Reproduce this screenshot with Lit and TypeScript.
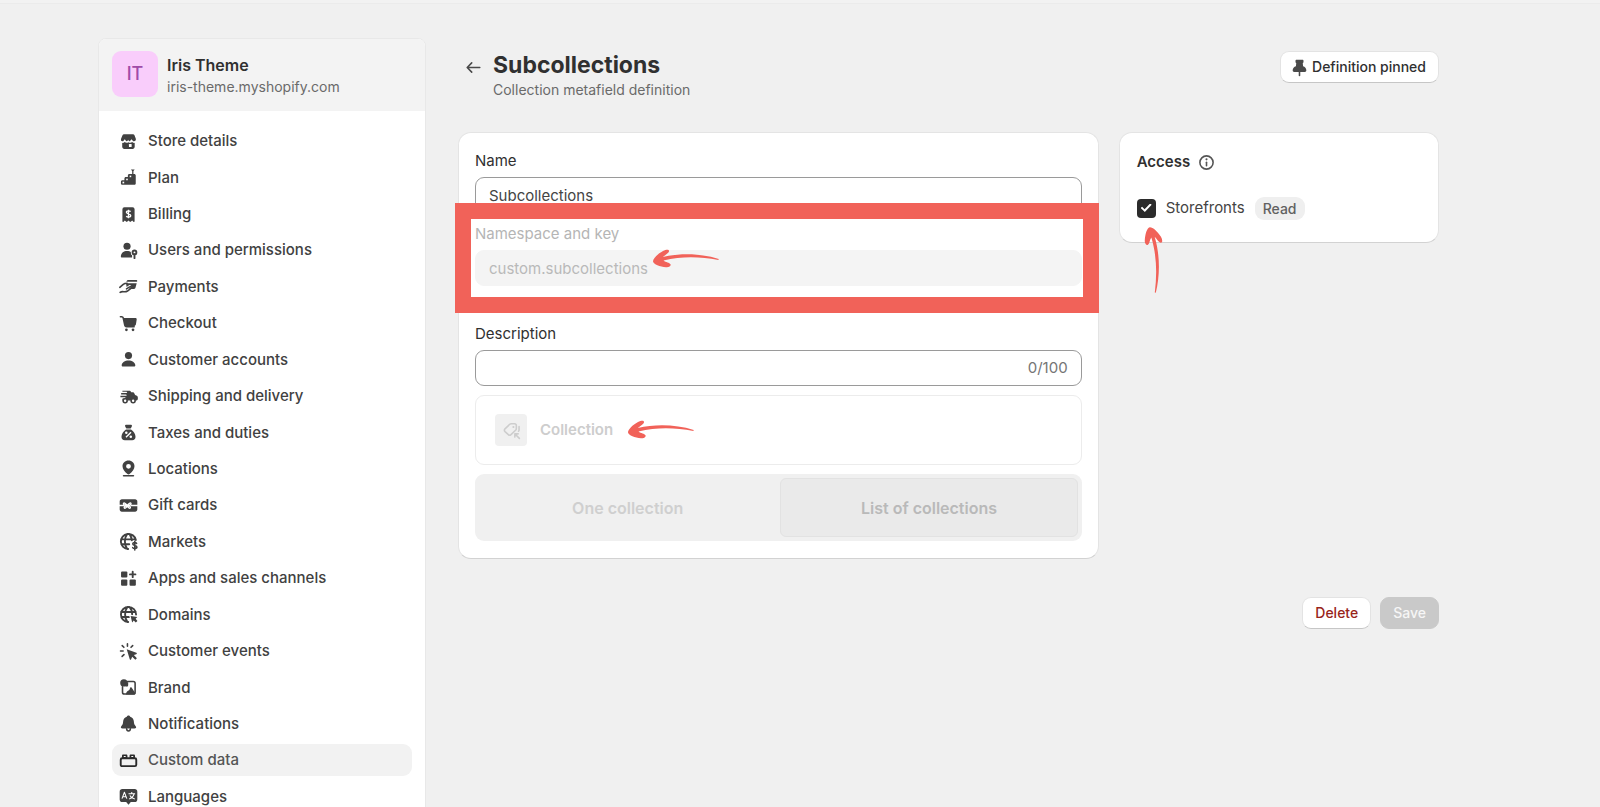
import { LitElement, html, svg, css, nothing } from "lit";
import { customElement, property, state } from "lit/decorators.js";
import { classMap } from "lit/directives/class-map.js";

// Glyphs drawn on a 20 x 20 grid; "cut" parts are painted in the panel colour.
const glyphs: Record<string, unknown> = {
  store: svg`
    <path d="M5.700 3h8.600c.6 0 1.100.3 1.300.9l1.300 3.300c.5 1.400-.3 2.600-1.700 2.600-.7 0-1.200-.6-1.700-1.300-.4-.6-.9-.6-1.300 0-.4.700-.9 1.200-1.500 1.200s-.5-1-1-1.400c-.4.400-.6 1.400-1.200 1.400S7.400 9.200 7 8.500c-.4-.6-.9-.6-1.200 0-.4.700-.9 1.300-1.600 1.300-1.400 0-1.700-1.200-1.200-2.600l1.400-3.300c.2-.6.7-.9 1.300-.9z"/>
    <path d="M4 11.300c.9.100 1.700-.2 2.400-.9.900.9 2.400 1 3.500.2 1.200.8 2.700.7 3.600-.2.7.7 1.500 1 2.400.9v3.800c0 1.100-.9 2-2 2H6c-1.100 0-2-.9-2-2z"/>
    <rect class="cut" x="10.400" y="12.300" width="2.600" height="3" rx=".5"/>`,
  plan: svg`
    <path d="M2.800 14c0-.8.6-1.400 1.400-1.400h1.900V11c0-.8.6-1.400 1.400-1.400h1.900V8c0-.8.6-1.400 1.400-1.400h4.700c.8 0 1.400.6 1.400 1.400v7.600c0 .8-.6 1.400-1.400 1.400H4.200c-.8 0-1.400-.6-1.400-1.400z"/>
    <rect class="cut" x="4.300" y="14" width="1.600" height="1.600"/>
    <rect class="cut" x="7.800" y="11.100" width="1.500" height="1.500"/>
    <rect class="cut" x="11.100" y="8.200" width="1.500" height="1.500"/>
    <path d="M12.300 2.300h3.600l-1.200 1.600v2.800h-1.200V3.900z"/>`,
  billing: svg`
    <path d="M4.200 5A1.900 1.900 0 0 1 6.100 3.100h7.800A1.900 1.900 0 0 1 15.800 5v11.500c0 .6-.7.8-1.100.4l-1.200-1.200-1.400 1.300c-.2.200-.6.200-.8 0L10 15.700l-1.300 1.300c-.2.200-.6.200-.8 0l-1.400-1.300-1.200 1.200c-.4.400-1.100.2-1.100-.4z"/>
    <path class="cut-line" d="M12 7.300c-.4-.6-1.100-.8-2-.8-1.200 0-2 .5-2 1.400 0 2 4.100.9 4.100 3 0 .9-.9 1.500-2.100 1.500-.9 0-1.700-.3-2.100-.9M10 5.400v8.100"/>`,
  users: svg`
    <circle cx="8.600" cy="6" r="3.400"/>
    <path d="M2.700 15.400c.3-3.100 2.700-5 5.900-5 1.600 0 3 .5 4 1.300-.2 1.400.2 2.400.9 3.100v1.800H3.700c-.6 0-1-.5-1-1.200z"/>
    <path class="cut" d="M15.600 8.300c2 0 3.500 1.500 3.500 3.500 0 1.200-.5 2.200-1.500 2.800V18h-3.800v-3.400c-1-.6-1.600-1.600-1.600-2.800 0-2 1.500-3.500 3.400-3.500z"/>
    <circle class="bold" cx="15.700" cy="11.800" r="1.800"/><path class="bold" d="M15.700 13.800v3.500"/>`,
  payments: svg`
    <path d="M8 5.200c.3-1 .9-1.500 1.900-1.500h7.400c.8 0 1.200.6 1 1.300l-.2.500H8z"/>
    <path d="M7.600 6.900h10.200l-1.100 4c-.3.900-.9 1.400-1.800 1.400h-4.500l1.900-1.800c1-1.100-.6-2.600-1.800-1.700l-2.300 1.600z"/>
    <path class="line" d="M1.700 10.800 5 7.900c1-.8 2-1 3.700-1M2 15.600c2.500-1.800 4.200.5 7-1.300l3.300-2.600c1-.9-.1-2.200-1.200-1.400l-3 2"/>`,
  cart: svg`
    <path class="line" d="M2.300 3.600h1.200c.8 0 1.300.4 1.500 1.200l1.500 7c.2.800.8 1.300 1.600 1.300h7.300"/>
    <path d="M5 4.800h11.700c.7 0 1.200.6 1.100 1.300l-.7 4.700c-.1.800-.7 1.400-1.500 1.500l-8.800.7z"/>
    <circle cx="8" cy="16" r="1.300"/><circle cx="14.300" cy="16" r="1.300"/>`,
  person: svg`
    <circle cx="10" cy="6.300" r="3.400"/>
    <path d="M3.500 15.400c.4-2.700 3-4.400 6.500-4.400s6.100 1.700 6.500 4.400c.1.800-.5 1.300-1.200 1.300H4.700c-.7 0-1.300-.5-1.200-1.300z"/>`,
  truck: svg`
    <path d="M4.200 4.500h6.500c1 0 1.700.6 1.900 1.500h1.300c.8 0 1.400.4 1.700 1.100l.7 1.500 1.700.8c.6.300.9.800.9 1.500v1.300c0 1-.7 1.700-1.700 1.700H4.300V12h2.200c1 0 1-1.300 0-1.300H2.300V9.300h5.200c1 0 1-1.300 0-1.300H3V6.700h5c1 0 1-1.200 0-1.200H4.200z"/>
    <circle class="wheel" cx="6.800" cy="14" r="1.900"/><circle class="wheel" cx="14.400" cy="14" r="1.900"/>`,
  tax: svg`
    <path d="M6.700 3.300c0-.5.4-.8.900-.8h4.800c.5 0 .9.300.9.800 0 .7-.6 2-1.300 2.800H8c-.7-.8-1.300-2.100-1.300-2.800z"/>
    <path d="M7.600 7.100h4.800c2.500 1.700 4.300 4.200 4.300 6.900 0 2-1.200 3.300-3.200 3.300h-7c-2 0-3.200-1.300-3.200-3.300 0-2.700 1.800-5.200 4.300-6.900z"/>
    <path class="cut-line" d="m7.600 14.500 4.800-4.800"/><circle class="cut" cx="7.900" cy="10.300" r="1.200"/><circle class="cut" cx="12.200" cy="14" r="1.200"/>`,
  pin: svg`
    <path fill-rule="evenodd" d="M10 2.400c3.300 0 5.700 2.400 5.700 5.500 0 2.800-1.900 5-4.700 7.400-.6.500-1.400.5-2 0-2.800-2.400-4.700-4.600-4.700-7.400 0-3.100 2.400-5.500 5.700-5.500zm0 3.200a2.300 2.300 0 1 0 0 4.600 2.300 2.300 0 0 0 0-4.600z"/>
    <path class="line" d="M5.300 16.900h9.400"/>`,
  gift: svg`
    <path d="M1.600 6.200c0-1.200.9-2.100 2.100-2.100h12.600c1.200 0 2.100.9 2.100 2.100v7.600c0 1.200-.9 2.100-2.100 2.100H3.700c-1.200 0-2.100-.9-2.100-2.100z"/>
    <path class="cut-line" d="M1 10h5M12 10h7"/>
    <path class="cut-line" d="M8.800 10C7 7.400 5.200 6.900 5.200 8.400S7 10 8.800 10c-1.800 0-3.200 1.200-2.900 2.200.4 1 2.100.3 2.900-2.200zm0 0c1.800-2.600 3.600-3.100 3.600-1.600S10.600 10 8.800 10c1.800 0 3.300 1.200 3 2.200-.4 1-2.200.3-3-2.200z"/>`,
  markets: svg`
    <path class="bold" d="M9.700 17.200A7.200 7.200 0 1 1 17 8.600M2.900 8h13.300M3.200 12.600h7.500M8.800 2.900c-3 4-3 10 0 14.200M10.800 2.900c1.500 1.800 2.300 3.900 2.400 5.900"/>
    <path class="line" d="M17.700 11.800c-.4-.6-1-.8-1.800-.8-1.100 0-1.800.5-1.800 1.400 0 1.900 3.900.9 3.900 2.900 0 .9-.9 1.400-2 1.400-.9 0-1.600-.3-2-.9M16 9.900V18"/>`,
  apps: svg`
    <rect x="2.900" y="3.300" width="6" height="5.700" rx="1"/><rect x="2.900" y="11" width="6" height="5.900" rx="1"/><rect x="11" y="11" width="6" height="5.900" rx="1"/>
    <path class="bold" d="M14 3.500v5.200M11.400 6.100h5.200"/>`,
  domains: svg`
    <path class="bold" d="M9.700 17.200A7.200 7.200 0 1 1 17.200 10M2.900 7.600h14M3.200 12.400h8M9 2.900c-3 4-3 10 0 14.200M11 2.900c1.800 2 2.600 4.500 2.500 6.900"/>
    <path class="cut" d="m10.500 10.200 8.500 1.600V19h-6.500z"/>
    <path d="m12 11.400 6.400 1-1.600 1.700 1.700 2-1.600 1.500-1.900-1.800-1.500 1.700z"/>`,
  events: svg`
    <path d="m8.300 7.800 9.200 3.400c.7.300.6 1-.1 1.300l-2.300.9 2.900 3-1.500 1.500-3-3-1 2.500c-.3.700-1 .7-1.300 0z"/>
    <path class="line" d="M9 2.600v2.300M4 4.400l1.600 1.600M2.400 9.500h2.500M3.900 14.700l1.800-1.700M14 4.400 12.400 6"/>`,
  brand: svg`
    <path class="line" d="M9 4.300h5.600c1 0 1.700.7 1.700 1.700v8.500c0 1-.7 1.700-1.700 1.700H6c-1 0-1.700-.7-1.700-1.700V9.300"/>
    <circle cx="5.600" cy="5.600" r="3.500"/><path d="M8 9.300c1 0 1.700-.7 1.700-1.700V5H7z"/>
    <path d="M7.500 16.700c.3-2.600 1.600-3.600 3.300-4.400l.9-2.200c.3-.6.900-.6 1.200 0l3.800 5.600-1 1z"/>`,
  bell: svg`
    <path d="M10 2.300c.9 0 1.500.6 1.600 1.300 2.200.7 3.400 2.300 3.500 4.600.1 2.200.6 3.200 1.600 4.200 1.200 1.300.5 2.300-1 2.300H4.300c-1.500 0-2.200-1-1-2.300 1-1 1.500-2 1.600-4.200.1-2.300 1.300-3.900 3.500-4.600.1-.7.700-1.300 1.600-1.300z"/>
    <path class="line" d="M8.200 15c.1 1.400.8 2.100 1.800 2.100s1.700-.7 1.800-2.100"/>`,
  blocks: svg`
    <path class="bold" d="M3.900 7.900h12.200c.8 0 1.300.5 1.300 1.300v4.900c0 .8-.5 1.300-1.300 1.300H3.900c-.8 0-1.300-.5-1.300-1.300V9.200c0-.8.5-1.300 1.300-1.300z"/>
    <path d="M3.800 7.600V5.700c0-.8.500-1.300 1.300-1.300h2.600c.8 0 1.300.5 1.300 1.300v1.900zM11 7.600V5.700c0-.8.500-1.300 1.300-1.300h2.600c.8 0 1.300.5 1.300 1.300v1.900z"/>
    <path class="cut-thin" d="M5.500 6.100h1.800M12.700 6.100h1.800"/>`,
  languages: svg`
    <path d="M1.600 5.400C1.600 3.900 2.600 2.900 4.100 2.900h11.800c1.500 0 2.500 1 2.500 2.500v7.400c0 1.500-1 2.500-2.500 2.500h-3.700L10 17.800l-2.200-2.500H4.100c-1.500 0-2.500-1-2.500-2.500z"/>
    <path class="cut-thin" d="m3.800 12 2.300-6 2.300 6M4.600 10.200h3M10 7.300h6.300M13.100 5.700v1.600M15.300 7.500c-.5 2.200-2.200 3.900-4.600 4.800M11.300 9c.8 1.600 2.400 2.800 4.700 3.300"/>`,
  thumbtack: svg`
    <path d="M6.200 3.500c0-.6.4-1 1-1h5.600c.6 0 1 .4 1 1v1.200c0 .5-.3.900-.7 1l.3 3.100c1.800.6 3.100 2 3.100 3.900 0 .9-.5 1.500-1.400 1.500H4.900c-.9 0-1.400-.6-1.400-1.500 0-1.900 1.300-3.300 3.100-3.900l.3-3.100c-.4-.1-.7-.5-.7-1z"/>
    <path class="line" d="M10 13v4.500"/>`,
  back: svg`<path class="line" d="M16 10H4.200M8.300 5.600 4 10l4.300 4.400"/>`,
  info: svg`<circle class="line" cx="10" cy="10" r="6.300"/><path class="line" d="M10 9.700v3.400"/><circle cx="10" cy="7" r="1"/>`,
  collection: svg`
    <path class="line" d="M9.800 3.500h3.100c1 0 1.700.7 1.700 1.700v2.900c0 .6-.2 1-.5 1.400l-4.600 4.400c-.8.700-1.800.7-2.500 0L3.800 11c-.7-.8-.7-1.800 0-2.500l4.500-4.400c.4-.4 1-.6 1.500-.6zM17.200 6.300v3.200c0 .5-.2.900-.5 1.200M17.500 17.500l-4.200-4.200M13.200 16.300v-3.100h3.200"/>
    <circle cx="11.800" cy="6.600" r="1"/>`,
};

const navItems: Array<[string, string]> = [
  ["store", "Store details"],
  ["plan", "Plan"],
  ["billing", "Billing"],
  ["users", "Users and permissions"],
  ["payments", "Payments"],
  ["cart", "Checkout"],
  ["person", "Customer accounts"],
  ["truck", "Shipping and delivery"],
  ["tax", "Taxes and duties"],
  ["pin", "Locations"],
  ["gift", "Gift cards"],
  ["markets", "Markets"],
  ["apps", "Apps and sales channels"],
  ["domains", "Domains"],
  ["events", "Customer events"],
  ["brand", "Brand"],
  ["bell", "Notifications"],
  ["blocks", "Custom data"],
  ["languages", "Languages"],
];

@customElement("ui-icon")
export class UiIcon extends LitElement {
  @property() name = "";

  static styles = css`
    :host {
      display: block;
      flex: none;
      width: 21px;
      height: 21px;
    }
    svg {
      display: block;
      width: 100%;
      height: 100%;
      fill: currentColor;
    }
    .line,
    .bold {
      fill: none;
      stroke: currentColor;
      stroke-width: 1.5;
      stroke-linecap: round;
      stroke-linejoin: round;
    }
    .bold {
      stroke-width: 1.8;
    }
    .cut {
      fill: #fff;
    }
    .cut-line,
    .cut-thin {
      fill: none;
      stroke: #fff;
      stroke-width: 1.3;
      stroke-linejoin: round;
    }
    .cut-thin {
      stroke-width: 1;
    }
    .wheel {
      fill: #fff;
      stroke: currentColor;
      stroke-width: 1.5;
    }
  `;

  render() {
    return html`<svg viewBox="0 0 20 20" aria-hidden="true">${glyphs[this.name] ?? nothing}</svg>`;
  }
}

@customElement("hand-arrow")
export class HandArrow extends LitElement {
  static styles = css`
    :host {
      display: block;
      width: 68px;
      height: 20px;
    }
    svg {
      display: block;
      width: 100%;
      height: 100%;
      fill: #f16259;
    }
  `;

  render() {
    return html`<svg viewBox="0 0 68 20" aria-hidden="true">
      <path d="M1 12.500C1 9.500 5.500 5 11 2c3.500-1.800 6.500-1.600 6 .5-.4 1.700-3.500 3.200-6.300 5.600 18-4.300 38-3.600 56 1.800l-.3 1C48 7.600 30 7 11.500 11.500c2.500 1.900 6 2 7 3.700.8 1.600-1.500 3.400-4.500 3C8 17.500 1.500 15.500 1 12.500z"/>
    </svg>`;
  }
}

@customElement("app-root")
export class AppRoot extends LitElement {
  @state() private current = "Custom data";
  @state() private description = "";

  static styles = css`
    :host {
      display: block;
      height: 100vh;
      overflow: hidden;
      background: #f0f0f0;
      border-top: 3px solid #f2f2f2;
      box-sizing: border-box;
      color: #303030;
      font-family: Inter, "Liberation Sans", sans-serif;
      font-size: 15px;
      line-height: 24px;
    }
    *,
    *::before {
      box-sizing: border-box;
    }
    h1,
    h2,
    p,
    ul {
      margin: 0;
      padding: 0;
    }
    button,
    input {
      font: inherit;
      color: inherit;
    }
    .page {
      display: grid;
      grid-template-columns: 328px minmax(0, 1fr);
      gap: 32px;
      height: 100%;
      padding: 34px 161px 0 98px;
      border-top: 1px solid #ebebeb;
    }

    .sidebar {
      display: flex;
      flex-direction: column;
      height: 100vh;
      background: #fff;
      border: 1px solid #e8e8e8;
      border-radius: 8px;
      overflow: hidden;
    }
    .shop {
      display: flex;
      gap: 9px;
      height: 72px;
      padding: 12px 13px 0;
      background: #f3f3f3;
    }
    .avatar {
      display: grid;
      place-items: center;
      width: 46px;
      height: 46px;
      border-radius: 9px;
      background: #f9cdfb;
      color: #a04ba8;
      font-size: 18px;
      font-weight: 500;
    }
    .shop-text {
      padding-top: 3px;
    }
    .shop-name {
      font-size: 16px;
      font-weight: 600;
      line-height: 22px;
    }
    .shop-url {
      color: #6a6a6a;
      font-size: 14px;
      line-height: 22px;
    }
    .menu {
      flex: 1;
      display: grid;
      grid-auto-rows: 1fr;
      align-items: center;
      padding: 12px 13px 29px;
      list-style: none;
    }
    .entry {
      display: flex;
      align-items: center;
      gap: 9px;
      height: 32px;
      padding: 0 6px;
      border-radius: 9px;
      color: #414141;
      font-weight: 500;
      text-decoration: none;
    }
    .entry.current {
      background: #f2f2f2;
      color: #555;
    }
    .entry.current ui-icon {
      color: #2a2a2a;
    }

    .heading {
      display: flex;
      align-items: flex-start;
      padding: 13px 0 30px 4px;
    }
    .back {
      display: grid;
      margin: 6px 8px 0 1px;
      padding: 0;
      border: 0;
      background: none;
      color: #4a4a4a;
    }
    .titles {
      flex: 1;
      padding: 1px 0 0 1px;
    }
    .title {
      font-size: 23px;
      font-weight: 700;
      line-height: 26px;
    }
    .subtitle {
      color: #6a6a6a;
      font-size: 14px;
      line-height: 24px;
    }
    .button {
      display: flex;
      align-items: center;
      height: 32px;
      padding: 0 12px;
      border: 1px solid #e3e3e3;
      border-bottom-color: #c6c6c6;
      border-radius: 9px;
      background: #fff;
      font-size: 14px;
      font-weight: 500;
    }
    .button.pinned {
      gap: 2px;
      padding-left: 8px;
      color: #303030;
    }
    .button.pinned ui-icon {
      color: #4a4a4a;
    }
    .button.danger {
      color: #98241a;
    }
    .button:disabled {
      border-color: #c9c9c9;
      background: #c9c9c9;
      color: #f6f6f6;
    }

    .columns {
      display: grid;
      grid-template-columns: minmax(0, 2fr) minmax(0, 1fr);
      align-items: start;
      gap: 20px;
    }
    .card {
      padding: 16px 16px 17px;
      border: 1px solid #e4e4e4;
      border-bottom-color: #d2d2d2;
      border-radius: 13px;
      background: #fff;
    }
    .form {
      display: grid;
      gap: 9px;
    }
    .field {
      display: grid;
      gap: 4px;
    }
    .box {
      display: flex;
      align-items: center;
      width: 100%;
      height: 36px;
      padding: 0 13px;
      border: 1px solid #9a9a9a;
      border-radius: 9px;
      background: #fff;
      color: #444;
    }
    .box:disabled {
      border-color: #f4f4f4;
      background: #f4f4f4;
      color: #b9b9b9;
    }
    .text {
      flex: 1;
      min-width: 0;
      height: 100%;
      padding: 0;
      border: 0;
      outline: 0;
      background: none;
    }
    .counter {
      color: #757575;
    }
    .locked {
      position: relative;
      padding-bottom: 27px;
      color: #b5b5b5;
    }
    .frame {
      position: absolute;
      inset: -19px -17px 0 -20px;
      border: 16px solid #f16259;
      pointer-events: none;
    }
    .note {
      position: absolute;
    }
    .beside-key {
      left: 177px;
      top: 27px;
    }
    .type {
      position: relative;
      display: flex;
      align-items: center;
      gap: 13px;
      height: 70px;
      padding: 0 19px;
      border: 1px solid #ececec;
      border-radius: 9px;
      color: #cdcdcd;
      font-weight: 600;
    }
    .tile {
      display: grid;
      place-items: center;
      width: 32px;
      height: 32px;
      border-radius: 4px;
      background: #f0f0f0;
    }
    .beside-type {
      left: 151px;
      top: 24px;
    }
    .segments {
      display: grid;
      grid-template-columns: 1fr 1fr;
      gap: 4px;
      height: 67px;
      padding: 4px;
      border-radius: 9px;
      background: #f0f0f0;
    }
    .segment {
      border: 1px solid transparent;
      border-radius: 6px;
      background: none;
      color: #cfcfcf;
      font-size: 16px;
      font-weight: 600;
    }
    .segment.chosen {
      border-color: #e2e2e2;
      background: #eaeaea;
      color: #b9b9b9;
    }

    .access {
      position: relative;
      display: grid;
      gap: 22px;
      padding: 17px;
    }
    .access-title {
      display: flex;
      align-items: center;
      gap: 6px;
      font-size: 15px;
      font-weight: 600;
      line-height: 24px;
    }
    .access-title ui-icon {
      color: #555;
    }
    .option {
      display: flex;
      align-items: center;
      gap: 10px;
      padding-bottom: 5px;
      color: #444;
    }
    .check {
      display: grid;
      place-items: center;
      width: 19px;
      height: 19px;
      margin: 0;
      border-radius: 4px;
      appearance: none;
      border: 1px solid #8a8a8a;
    }
    .check:checked {
      border: 0;
      background: #2b2b2b;
    }
    .check:checked::before {
      content: "";
      width: 11px;
      height: 9px;
      background: #fff;
      clip-path: polygon(0 50%, 13% 36%, 36% 64%, 86% 0, 100% 14%, 38% 94%);
    }
    .badge {
      padding: 0 8px;
      border-radius: 9px;
      background: #efefef;
      color: #616161;
      font-size: 14px;
      font-weight: 500;
      line-height: 23px;
    }
    .below-check {
      left: 0;
      top: 117px;
      transform: rotate(87deg);
    }
    .actions {
      display: flex;
      justify-content: flex-end;
      gap: 9px;
      padding-top: 38px;
    }
  `;

  private renderSidebar() {
    return html`
      <aside class="sidebar">
        <div class="shop">
          <div class="avatar">IT</div>
          <div class="shop-text">
            <p class="shop-name">Iris Theme</p>
            <p class="shop-url">iris-theme.myshopify.com</p>
          </div>
        </div>
        <ul class="menu">
          ${navItems.map(
            ([icon, label]) => html`<li>
              <a
                href="#"
                class=${classMap({ entry: true, current: label === this.current })}
                @click=${(e: Event) => {
                  e.preventDefault();
                  this.current = label;
                }}
                ><ui-icon name=${icon}></ui-icon>${label}</a
              >
            </li>`,
          )}
        </ul>
      </aside>
    `;
  }

  private renderForm() {
    return html`
      <section class="card form">
        <div class="field">
          <label for="name">Name</label>
          <input id="name" class="box" type="text" value="Subcollections" />
        </div>
        <div class="field locked">
          <label for="key">Namespace and key</label>
          <input id="key" class="box" type="text" value="custom.subcollections" disabled />
          <div class="frame"></div>
          <hand-arrow class="note beside-key"></hand-arrow>
        </div>
        <div class="field">
          <label for="description">Description</label>
          <div class="box">
            <input
              id="description"
              class="text"
              type="text"
              maxlength="100"
              .value=${this.description}
              @input=${(e: Event) => (this.description = (e.target as HTMLInputElement).value)}
            />
            <span class="counter">${this.description.length}/100</span>
          </div>
        </div>
        <div class="type">
          <span class="tile"><ui-icon name="collection"></ui-icon></span>
          Collection
          <hand-arrow class="note beside-type"></hand-arrow>
        </div>
        <div class="segments">
          <button class="segment" type="button" disabled>One collection</button>
          <button class="segment chosen" type="button" disabled>List of collections</button>
        </div>
      </section>
    `;
  }

  render() {
    return html`
      <div class="page">
        ${this.renderSidebar()}
        <main>
          <header class="heading">
            <button class="back" type="button" aria-label="Back"><ui-icon name="back"></ui-icon></button>
            <div class="titles">
              <h1 class="title">Subcollections</h1>
              <p class="subtitle">Collection metafield definition</p>
            </div>
            <button class="button pinned" type="button">
              <ui-icon name="thumbtack"></ui-icon>Definition pinned
            </button>
          </header>
          <div class="columns">
            ${this.renderForm()}
            <section class="card access">
              <h2 class="access-title">Access <ui-icon name="info"></ui-icon></h2>
              <div class="option">
                <input id="storefronts" class="check" type="checkbox" checked />
                <label for="storefronts">Storefronts</label>
                <span class="badge">Read</span>
              </div>
              <hand-arrow class="note below-check"></hand-arrow>
            </section>
          </div>
          <div class="actions">
            <button class="button danger" type="button">Delete</button>
            <button class="button" type="button" disabled>Save</button>
          </div>
        </main>
      </div>
    `;
  }
}
